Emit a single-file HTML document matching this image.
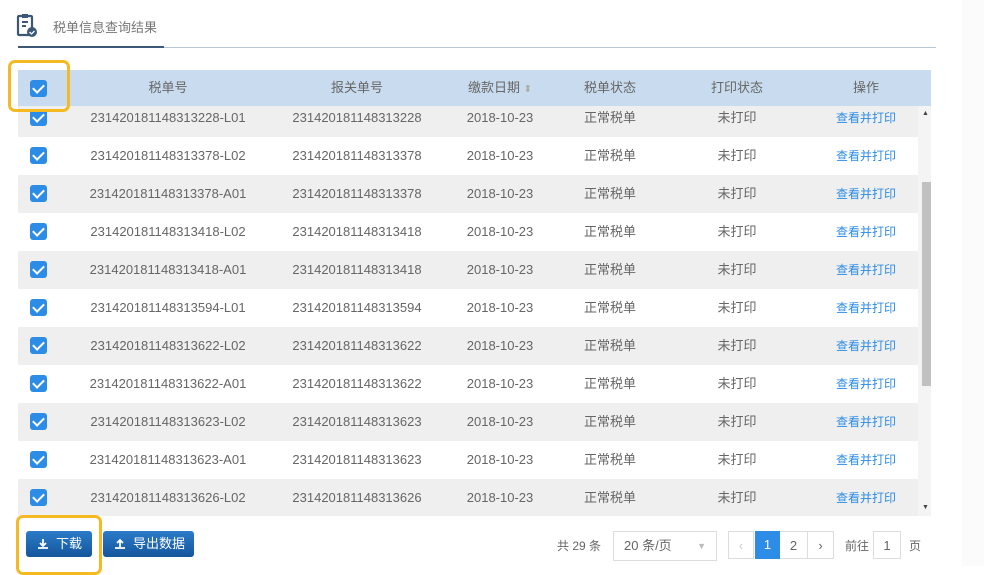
<!DOCTYPE html><html><head><meta charset="utf-8"><style>
*{margin:0;padding:0;box-sizing:border-box}
body{width:984px;height:566px;background:#fff;font-family:"Liberation Sans","Noto Sans CJK SC",sans-serif;position:relative;overflow:hidden;color:#666}
.abs{position:absolute}
.cb{position:absolute;width:17px;height:17px;background:#2d8ce6;border-radius:3px}
.cb:after{content:"";position:absolute;left:5px;top:2px;width:5px;height:9px;border:solid #fff;border-width:0 2px 2px 0;transform:rotate(45deg)}
.row{position:absolute;left:0;width:900px;height:38px;font-size:13px;color:#666}
.row span,.hd span{position:absolute;top:0;line-height:38px;transform:translateX(-50%);white-space:nowrap}
.g{background:#efefef}
.link{color:#2d8ce6;font-size:12px}
.btn{position:absolute;height:26px;background:linear-gradient(#2a7bc8,#15569c);color:#fff;font-size:13px;line-height:26px;border-radius:3px;padding-left:30px}
.btn svg{position:absolute;left:11px;top:7px}
.box{position:absolute;border:1px solid #ddd;background:#fff;font-size:13px;color:#666;text-align:center;line-height:28px}
</style></head><body>
<svg class="abs" style="left:16px;top:13px" width="22" height="25" viewBox="0 0 22 25"><rect x="2" y="3" width="14" height="19" rx="1" fill="none" stroke="#3b5876" stroke-width="2.2"/><rect x="6" y="1" width="6" height="4" fill="#3b5876"/><path d="M6 9h6M6 13h4" stroke="#3b5876" stroke-width="2"/><circle cx="16" cy="19" r="5" fill="#3b5876"/><path d="M13.5 19l2 2 3-3" stroke="#fff" stroke-width="1.3" fill="none"/></svg>
<div class="abs" style="left:53px;top:17px;font-size:13px;color:#777">税单信息查询结果</div>
<div class="abs" style="left:18px;top:47px;width:918px;height:1px;background:#b9c6d4"></div>
<div class="abs" style="left:18px;top:46px;width:146px;height:2px;background:#3b5876"></div>
<div class="abs hd" style="left:18px;top:70px;width:913px;height:36px;background:#c9dcef;font-size:13px;color:#666">
<div class="cb" style="left:12px;top:10px"></div>
<span style="left:150px;line-height:36px">税单号</span><span style="left:339px;line-height:36px">报关单号</span><span style="left:482px;line-height:36px">缴款日期 <span style="position:static;color:#aaa;font-size:10px;transform:none">⬍</span></span><span style="left:592px;line-height:36px">税单状态</span><span style="left:719px;line-height:36px">打印状态</span><span style="left:848px;line-height:36px">操作</span>
</div>
<div class="abs" style="left:18px;top:106px;width:900px;height:410px;overflow:hidden">
<div class="abs" style="left:0;top:-7px;width:900px">
<div class="row g" style="top:0"><div class="cb" style="left:12px;top:10px"></div><span style="left:150px">231420181148313228-L01</span><span style="left:339px">231420181148313228</span><span style="left:482px">2018-10-23</span><span style="left:592px">正常税单</span><span style="left:719px">未打印</span><span class="link" style="left:848px">查看并打印</span></div>
<div class="row" style="top:38px"><div class="cb" style="left:12px;top:10px"></div><span style="left:150px">231420181148313378-L02</span><span style="left:339px">231420181148313378</span><span style="left:482px">2018-10-23</span><span style="left:592px">正常税单</span><span style="left:719px">未打印</span><span class="link" style="left:848px">查看并打印</span></div>
<div class="row g" style="top:76px"><div class="cb" style="left:12px;top:10px"></div><span style="left:150px">231420181148313378-A01</span><span style="left:339px">231420181148313378</span><span style="left:482px">2018-10-23</span><span style="left:592px">正常税单</span><span style="left:719px">未打印</span><span class="link" style="left:848px">查看并打印</span></div>
<div class="row" style="top:114px"><div class="cb" style="left:12px;top:10px"></div><span style="left:150px">231420181148313418-L02</span><span style="left:339px">231420181148313418</span><span style="left:482px">2018-10-23</span><span style="left:592px">正常税单</span><span style="left:719px">未打印</span><span class="link" style="left:848px">查看并打印</span></div>
<div class="row g" style="top:152px"><div class="cb" style="left:12px;top:10px"></div><span style="left:150px">231420181148313418-A01</span><span style="left:339px">231420181148313418</span><span style="left:482px">2018-10-23</span><span style="left:592px">正常税单</span><span style="left:719px">未打印</span><span class="link" style="left:848px">查看并打印</span></div>
<div class="row" style="top:190px"><div class="cb" style="left:12px;top:10px"></div><span style="left:150px">231420181148313594-L01</span><span style="left:339px">231420181148313594</span><span style="left:482px">2018-10-23</span><span style="left:592px">正常税单</span><span style="left:719px">未打印</span><span class="link" style="left:848px">查看并打印</span></div>
<div class="row g" style="top:228px"><div class="cb" style="left:12px;top:10px"></div><span style="left:150px">231420181148313622-L02</span><span style="left:339px">231420181148313622</span><span style="left:482px">2018-10-23</span><span style="left:592px">正常税单</span><span style="left:719px">未打印</span><span class="link" style="left:848px">查看并打印</span></div>
<div class="row" style="top:266px"><div class="cb" style="left:12px;top:10px"></div><span style="left:150px">231420181148313622-A01</span><span style="left:339px">231420181148313622</span><span style="left:482px">2018-10-23</span><span style="left:592px">正常税单</span><span style="left:719px">未打印</span><span class="link" style="left:848px">查看并打印</span></div>
<div class="row g" style="top:304px"><div class="cb" style="left:12px;top:10px"></div><span style="left:150px">231420181148313623-L02</span><span style="left:339px">231420181148313623</span><span style="left:482px">2018-10-23</span><span style="left:592px">正常税单</span><span style="left:719px">未打印</span><span class="link" style="left:848px">查看并打印</span></div>
<div class="row" style="top:342px"><div class="cb" style="left:12px;top:10px"></div><span style="left:150px">231420181148313623-A01</span><span style="left:339px">231420181148313623</span><span style="left:482px">2018-10-23</span><span style="left:592px">正常税单</span><span style="left:719px">未打印</span><span class="link" style="left:848px">查看并打印</span></div>
<div class="row g" style="top:380px"><div class="cb" style="left:12px;top:10px"></div><span style="left:150px">231420181148313626-L02</span><span style="left:339px">231420181148313626</span><span style="left:482px">2018-10-23</span><span style="left:592px">正常税单</span><span style="left:719px">未打印</span><span class="link" style="left:848px">查看并打印</span></div>
</div></div>
<div class="abs" style="left:918px;top:106px;width:13px;height:410px;background:#f4f4f4"></div>
<div class="abs" style="left:922px;top:182px;width:9px;height:204px;background:#c1c1c1"></div>
<div class="abs" style="left:922px;top:110px;font-size:7px;color:#444">▲</div>
<div class="abs" style="left:922px;top:504px;font-size:7px;color:#444">▼</div>
<div class="abs" style="left:962px;top:0;width:22px;height:566px;background:#fbfbfb"></div>
<div class="abs" style="left:8px;top:60px;width:62px;height:52px;border:3px solid #f5b921;border-radius:7px"></div>
<div class="btn" style="left:26px;top:531px;width:66px"><svg width="12" height="12" viewBox="0 0 12 12"><path d="M6 1v6M3 5l3 3 3-3M1 10h10" stroke="#fff" stroke-width="1.8" fill="none"/></svg>下载</div>
<div class="btn" style="left:103px;top:531px;width:91px"><svg width="12" height="12" viewBox="0 0 12 12"><path d="M6 9V3M3 5l3-3 3 3M1 10h10" stroke="#fff" stroke-width="1.8" fill="none"/></svg>导出数据</div>
<div class="abs" style="left:16px;top:515px;width:86px;height:60px;border:3px solid #f5b921;border-radius:7px"></div>
<div class="abs" style="left:557px;top:537px;font-size:12px;color:#666">共 29 条</div>
<div class="box" style="left:613px;top:531px;width:104px;height:30px;text-align:left;padding-left:10px">20 条/页<span style="position:absolute;right:10px;color:#bbb;font-size:9px">▼</span></div>
<div class="box" style="left:728px;top:531px;width:26px;height:28px;color:#ccc">‹</div>
<div class="abs" style="left:755px;top:531px;width:25px;height:28px;background:#2d8ce6;color:#fff;font-size:13px;text-align:center;line-height:28px">1</div>
<div class="box" style="left:780px;top:531px;width:27px;height:28px;border-left:0;border-right:0">2</div>
<div class="box" style="left:807px;top:531px;width:27px;height:28px">›</div>
<div class="abs" style="left:845px;top:537px;font-size:12px;color:#666">前往</div>
<div class="box" style="left:873px;top:531px;width:28px;height:28px">1</div>
<div class="abs" style="left:909px;top:537px;font-size:12px;color:#666">页</div>
</body></html>
